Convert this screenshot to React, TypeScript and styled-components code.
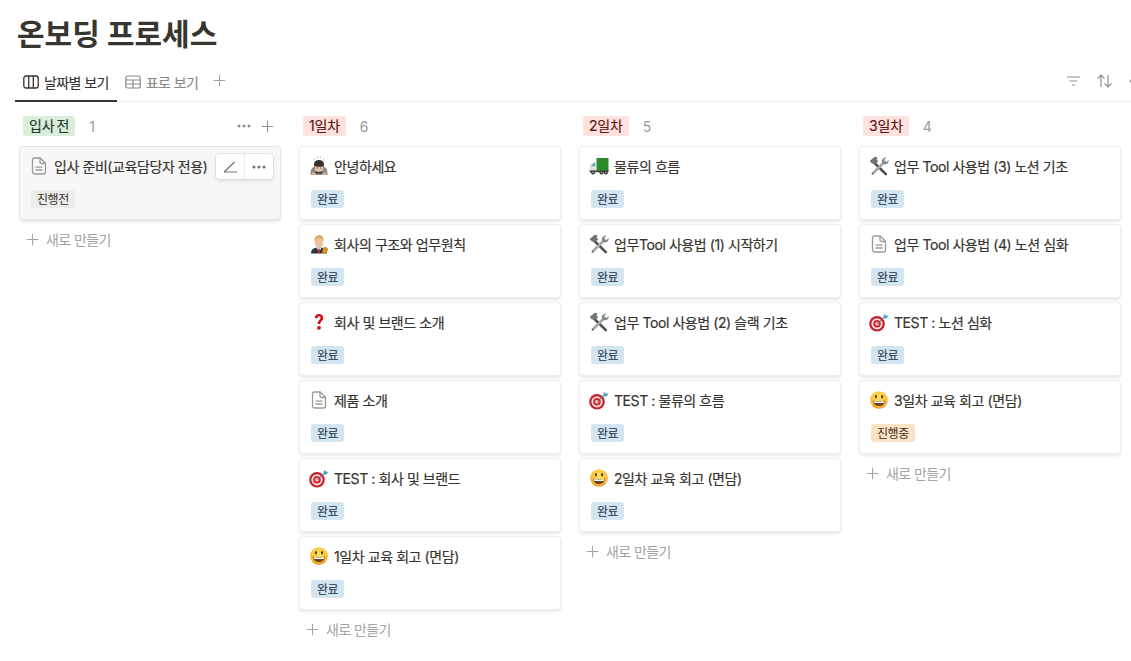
import React from "react";
import styled, { createGlobalStyle } from "styled-components";

const Global = createGlobalStyle`
  html, body { margin: 0; padding: 0; background: #fff; overflow: hidden; }
  body { font-family: Inter, "Noto Sans CJK KR", "Noto Sans", sans-serif; color: #37352f; }
`;

const Page = styled.div`
  width: 1131px;
  height: 661px;
  overflow: hidden;
  padding-left: 15px;
  box-sizing: border-box;
`;
const Title = styled.h1`
  margin: 0;
  padding: 13px 0 0 2px;
  height: 60px;
  box-sizing: border-box;
  font-size: 30px;
  line-height: 42px;
  font-weight: 700;
  color: #37352f;
  white-space: nowrap;
`;
const TabBar = styled.div`
  display: flex;
  align-items: stretch;
  height: 42px;
  border-bottom: 1px solid #ededec;
  box-sizing: border-box;
  width: 1116px;
`;
const Tab = styled.div<{ $active?: boolean }>`
  display: flex;
  align-items: center;
  gap: 5px;
  padding: 1px 8px 0;
  font-size: 14px;
  font-weight: 400;
  letter-spacing: -0.6px;
  -webkit-text-stroke: 0.15px currentColor;
  color: ${(p) => (p.$active ? "#37352f" : "#8b8a86")};
  box-shadow: ${(p) => (p.$active ? "inset 0 -2px 0 #37352f" : "none")};
  margin-bottom: -1px;
  white-space: nowrap;
`;
const AddTab = styled.div`
  display: flex;
  align-items: center;
  margin-left: 7px;
  color: #a5a4a1;
`;
const Actions = styled.div`
  margin-left: auto;
  display: flex;
  align-items: center;
  gap: 17px;
  color: #91908c;
  margin-right: -14px;
`;
const Board = styled.div`
  display: flex;
  gap: 18px;
  padding: 14px 0 0 4px;
`;
const Column = styled.div`
  width: 262px;
  flex: none;
  display: flex;
  flex-direction: column;
`;
const ColHead = styled.div`
  display: flex;
  align-items: center;
  height: 20px;
  margin-bottom: 10px;
  padding-left: 4px;
`;
const HeadTag = styled.span<{ $bg: string; $fg: string }>`
  height: 20px;
  line-height: 20px;
  padding: 0 6px;
  border-radius: 3px;
  font-size: 14px;
  font-weight: 400;
  letter-spacing: -0.2px;
  word-spacing: -1.5px;
  -webkit-text-stroke: 0.15px currentColor;
  background: ${(p) => p.$bg};
  color: ${(p) => p.$fg};
`;
const Count = styled.span`
  margin-left: 14px;
  font-size: 14px;
  color: #9b9a97;
`;
const HeadActions = styled.div`
  margin-left: auto;
  margin-right: 7px;
  display: flex;
  align-items: center;
  gap: 10px;
  color: #91908c;
`;
const Cards = styled.div`
  display: flex;
  flex-direction: column;
  gap: 4px;
`;
const Card = styled.div<{ $hover?: boolean }>`
  position: relative;
  height: 74px;
  box-sizing: border-box;
  border-radius: 4px;
  background: ${(p) => (p.$hover ? "#f7f7f7" : "#fff")};
  box-shadow: inset 0 0 0 1px rgba(15, 15, 15, 0.07), 0 2px 3px rgba(15, 15, 15, 0.09);
  padding: 9px 10px 0;
`;
const CardTitle = styled.div`
  display: flex;
  align-items: center;
  gap: 5px;
  height: 22px;
  font-size: 14px;
  font-weight: 400;
  letter-spacing: -0.42px;
  -webkit-text-stroke: 0.2px currentColor;
  color: #37352f;
  white-space: nowrap;
`;
const IconSlot = styled.span`
  width: 20px;
  height: 20px;
  display: flex;
  align-items: center;
  justify-content: center;
  flex: none;
`;
const Tag = styled.span<{ $bg: string; $fg: string }>`
  display: block;
  width: fit-content;
  margin: 13px 0 0 2px;
  height: 18px;
  line-height: 20px;
  padding: 0 6px;
  border-radius: 3px;
  font-size: 12px;
  letter-spacing: -0.45px;
  background: ${(p) => p.$bg};
  color: ${(p) => p.$fg};
`;
const Hover = styled.div`
  position: absolute;
  top: 8px;
  right: 8px;
  width: 57px;
  height: 25px;
  display: flex;
  background: #fff;
  border-radius: 4px;
  box-shadow: 0 0 0 1px rgba(15, 15, 15, 0.06), 0 2px 4px rgba(15, 15, 15, 0.1);
  color: #6f6e69;
`;
const HoverBtn = styled.span<{ $divided?: boolean }>`
  flex: 1;
  display: flex;
  align-items: center;
  justify-content: center;
  border-left: ${(p) => (p.$divided ? "1px solid #ededec" : "none")};
`;
const AddRow = styled.div`
  display: flex;
  align-items: center;
  gap: 7px;
  height: 20px;
  margin-top: 9px;
  padding-left: 7px;
  font-size: 14px;
  letter-spacing: -0.6px;
  color: #a5a4a1;
`;

const Plus = ({ s = 14 }: { s?: number }) => (
  <svg width={s} height={s} viewBox="0 0 14 14" fill="none" stroke="currentColor" strokeWidth="1.2">
    <path d="M7 .8v12.4M.8 7h12.4" />
  </svg>
);
const Dots = () => (
  <svg width="14" height="4" viewBox="0 0 14 4" fill="currentColor">
    <circle cx="2" cy="2" r="1.5" />
    <circle cx="7" cy="2" r="1.5" />
    <circle cx="12" cy="2" r="1.5" />
  </svg>
);
const Doc = () => (
  <svg width="16" height="18" viewBox="0 0 16 18" fill="none" stroke="#9b9a97" strokeWidth="1.3">
    <path d="M3 1h6.2L14.5 6.2V15a2 2 0 0 1-2 2h-9a2 2 0 0 1-2-2V3a2 2 0 0 1 1.500-2z" />
    <path d="M9 1.200V5a1.500 1.500 0 0 0 1.500 1.500h4" />
    <path d="M4.500 10.200h7M4.500 13h7" />
  </svg>
);
const Smile = () => (
  <svg width="18" height="18" viewBox="0 0 20 20">
    <defs>
      <radialGradient id="sm" cx="50%" cy="38%" r="62%">
        <stop offset="0" stopColor="#ffe06a" />
        <stop offset="0.7" stopColor="#fcc234" />
        <stop offset="1" stopColor="#ee8f1e" />
      </radialGradient>
    </defs>
    <circle cx="10" cy="10" r="9.800" fill="url(#sm)" />
    <ellipse cx="6.600" cy="6.400" rx="1.200" ry="2" fill="#5a3f14" />
    <ellipse cx="13.400" cy="6.400" rx="1.200" ry="2" fill="#5a3f14" />
    <path d="M3.200 10.600c2 .9 11.600.9 13.600 0-.3 3.800-3.100 6.200-6.800 6.200s-6.500-2.400-6.800-6.200z" fill="#6b4516" />
    <path d="M4 11.100c2.400.7 9.600.7 12 0l-.4 1.900c-2.500.6-8.700.6-11.200 0z" fill="#fff" />
  </svg>
);
const Target = () => (
  <svg width="20" height="20" viewBox="0 0 20 20">
    <circle cx="8" cy="11.800" r="7.800" fill="#c4202e" />
    <circle cx="8" cy="11.800" r="5.600" fill="#f1dcd8" />
    <circle cx="8" cy="11.800" r="3.800" fill="#d12a35" />
    <circle cx="8" cy="11.800" r="1.700" fill="#f1dcd8" />
    <path d="M8 11.800L16 4.500" stroke="#5d6b74" strokeWidth="1" />
    <path d="M14.300 5.600l1-3.600 1.500 1.500 2.400.2-1.300 2.400-2.200.6z" fill="#36a9c9" />
  </svg>
);
const Tools = () => (
  <svg width="20" height="20" viewBox="0 0 20 20">
    <path d="M5 6.500L16.800 18.200" stroke="#4c4f52" strokeWidth="2.600" strokeLinecap="round" />
    <path d="M.6 5L5.800.8l3 .8-1.200 1.300 1.500 2.300-3 3-1.800-1.700-1.100 1.200z" fill="#6f7477" />
    <path d="M15.600 5.800L3.700 17.500" stroke="#a2a6a9" strokeWidth="2.600" strokeLinecap="round" />
    <path d="M13 6.300c-.6-2.400 1.300-5 4.400-4.700l-2.300 2.400.6 1.700 1.700.5 2.300-2.300c.3 3-2.300 5-4.800 4.300z" fill="#7f8487" />
    <circle cx="3.600" cy="17.500" r=".7" fill="#55585a" />
  </svg>
);
const Truck = () => (
  <svg width="20" height="20" viewBox="0 0 20 20">
    <rect x="7.500" y="2" width="12" height="13" fill="#2c8a2c" />
    <path d="M7 6H4L.5 10.500V15H7z" fill="#dfe3d8" />
    <path d="M6.300 7.200H4.300L2 10.300h4.300z" fill="#57b0c9" />
    <rect x="0.500" y="14.500" width="19" height="1.800" fill="#4b4a42" />
    <circle cx="4" cy="16.400" r="2" fill="#2a2a28" />
    <circle cx="12.500" cy="16.400" r="2" fill="#2a2a28" />
    <circle cx="16.800" cy="16.400" r="2" fill="#2a2a28" />
    <circle cx="4" cy="16.400" r=".8" fill="#bbb" />
    <circle cx="12.500" cy="16.400" r=".8" fill="#bbb" />
    <circle cx="16.800" cy="16.400" r=".8" fill="#bbb" />
  </svg>
);
const Question = () => (
  <svg width="20" height="20" viewBox="0 0 20 20">
    <path d="M5.800 6.200C5.800.6 14.200.6 14.200 5.700c0 3.200-3 3.600-3 6.300H8.700c0-3.900 2.800-4.100 2.800-6.300 0-1.900-3-2-3 .5z" fill="#e3000f" />
    <circle cx="10" cy="15.800" r="1.900" fill="#e3000f" />
  </svg>
);
const Bow = () => (
  <svg width="20" height="20" viewBox="0 0 20 20">
    <path d="M1.500 19c-.5-6 2.500-9.500 8.500-9.500s9 3.500 8.500 9.500z" fill="#85888b" />
    <path d="M5 8.500C5 5.500 7 4 10 4s5 1.500 5 4.500l-.4 3H5.400z" fill="#37302c" />
    <path d="M5.600 10c1 1 7.800 1 8.800 0l-.3 3.500c-.9 2.800-7.300 2.800-8.200 0z" fill="#e9c5a3" />
    <path d="M7.600 12h1.500M10.900 12h1.500" stroke="#3b2a20" strokeWidth=".7" />
    <path d="M7 15.500c2 1 4 1 6 0l.8 2H6.200z" fill="#3a3633" />
    <path d="M2 19l1.500-3 3 1 .5 2zM18 19l-1.500-3-3 1-.5 2z" fill="#d9b08e" />
    <path d="M5 2.500l.6 1.100M8.200.8l.3 1.300M11.800.8l-.3 1.300M15 2.500l-.6 1.100" stroke="#a5a5a5" strokeWidth=".8" />
  </svg>
);
const Boss = () => (
  <svg width="20" height="20" viewBox="0 0 20 20">
    <path d="M2 19.500c0-4.500 3-6 8-6s8 1.500 8 6z" fill="#2c3642" />
    <path d="M7.500 13.500h5L10 18.500z" fill="#f3f3f3" />
    <path d="M9.400 14.500h1.200l.6 4.500H8.800z" fill="#b22a2a" />
    <ellipse cx="10" cy="8.500" rx="4.300" ry="5" fill="#eac39a" />
    <path d="M5.300 7.500C5 3.200 7.500 1 10.300 1c3 0 4.800 2.300 4.400 6.500-.7-2-2-3-4.400-3-2 0-4 1-5 3z" fill="#dcb36c" />
    <path d="M13 19.500l1-5.500c2-2 5-.8 5 1.500l-1.500 4z" fill="#dd8f20" />
  </svg>
);

type Status = "done" | "doing" | "todo";
const tags: Record<Status, { label: string; bg: string; fg: string }> = {
  done: { label: "완료", bg: "#d3e5ef", fg: "#183347" },
  doing: { label: "진행중", bg: "#fae3c4", fg: "#402c1b" },
  todo: { label: "진행전", bg: "#ececeb", fg: "#32302c" },
};

type CardData = { icon: React.ReactNode; title: string; status: Status; hover?: boolean };
type ColData = { name: string; bg: string; fg: string; actions?: boolean; cards: CardData[] };

const red = { bg: "#ffe2dd", fg: "#5d1715" };
const columns: ColData[] = [
  {
    name: "입사 전", bg: "#dbeddb", fg: "#1c3829", actions: true,
    cards: [{ icon: <Doc />, title: "입사 준비(교육담당자 전용)", status: "todo", hover: true }],
  },
  {
    name: "1일차", ...red,
    cards: [
      { icon: <Bow />, title: "안녕하세요", status: "done" },
      { icon: <Boss />, title: "회사의 구조와 업무원칙", status: "done" },
      { icon: <Question />, title: "회사 및 브랜드 소개", status: "done" },
      { icon: <Doc />, title: "제품 소개", status: "done" },
      { icon: <Target />, title: "TEST : 회사 및 브랜드", status: "done" },
      { icon: <Smile />, title: "1일차 교육 회고 (면담)", status: "done" },
    ],
  },
  {
    name: "2일차", ...red,
    cards: [
      { icon: <Truck />, title: "물류의 흐름", status: "done" },
      { icon: <Tools />, title: "업무Tool 사용법 (1) 시작하기", status: "done" },
      { icon: <Tools />, title: "업무 Tool 사용법 (2) 슬랙 기초", status: "done" },
      { icon: <Target />, title: "TEST : 물류의 흐름", status: "done" },
      { icon: <Smile />, title: "2일차 교육 회고 (면담)", status: "done" },
    ],
  },
  {
    name: "3일차", ...red,
    cards: [
      { icon: <Tools />, title: "업무 Tool 사용법 (3) 노션 기초", status: "done" },
      { icon: <Doc />, title: "업무 Tool 사용법 (4) 노션 심화", status: "done" },
      { icon: <Target />, title: "TEST : 노션 심화", status: "done" },
      { icon: <Smile />, title: "3일차 교육 회고 (면담)", status: "doing" },
    ],
  },
];

export default function App() {
  return (
    <Page>
      <Global />
      <Title>온보딩 프로세스</Title>
      <TabBar>
        <Tab $active>
          <svg width="16" height="14" viewBox="0 0 16 14" fill="none" stroke="#37352f" strokeWidth="1.300">
            <rect x=".8" y="1" width="14.400" height="12" rx="2.200" />
            <path d="M5.700 1v12M10.300 1v12" />
          </svg>
          날짜별 보기
        </Tab>
        <Tab>
          <svg width="16" height="14" viewBox="0 0 16 14" fill="none" stroke="#8b8a86" strokeWidth="1.200">
            <rect x=".8" y="1" width="14.400" height="12" rx="2" />
            <path d="M.8 5h14.400M.8 9h14.400M8 5v8" />
          </svg>
          표로 보기
        </Tab>
        <AddTab>
          <Plus s={13} />
        </AddTab>
        <Actions>
          <svg width="13" height="10" viewBox="0 0 13 10" fill="none" stroke="currentColor" strokeWidth="1.200">
            <path d="M0 1h13M2.500 5h8M5 9h3" />
          </svg>
          <svg width="15" height="14" viewBox="0 0 15 14" fill="none" stroke="currentColor" strokeWidth="1.200">
            <path d="M4 13V1M.5 4.500L4 1l3.500 3.500M11 1v12M7.500 9.500L11 13l3.500-3.500" />
          </svg>
          <svg width="16" height="14" viewBox="0 0 16 14" fill="none" stroke="currentColor" strokeWidth="1.200">
            <path d="M1 7l4-4M1 7l4 4" />
          </svg>
        </Actions>
      </TabBar>
      <Board>
        {columns.map((col) => (
          <Column key={col.name}>
            <ColHead>
              <HeadTag $bg={col.bg} $fg={col.fg}>{col.name}</HeadTag>
              <Count>{col.cards.length}</Count>
              {col.actions && (
                <HeadActions>
                  <Dots />
                  <Plus s={13} />
                </HeadActions>
              )}
            </ColHead>
            <Cards>
              {col.cards.map((c) => (
                <Card key={c.title} $hover={c.hover}>
                  <CardTitle>
                    <IconSlot>{c.icon}</IconSlot>
                    {c.title}
                  </CardTitle>
                  <Tag $bg={tags[c.status].bg} $fg={tags[c.status].fg}>{tags[c.status].label}</Tag>
                  {c.hover && (
                    <Hover>
                      <HoverBtn>
                        <svg width="15" height="12" viewBox="0 0 15 12" fill="none" stroke="currentColor" strokeWidth="1.100">
                          <path d="M1 11L11.500 1M1 11h13" />
                        </svg>
                      </HoverBtn>
                      <HoverBtn $divided>
                        <Dots />
                      </HoverBtn>
                    </Hover>
                  )}
                </Card>
              ))}
            </Cards>
            <AddRow>
              <Plus s={13} />
              새로 만들기
            </AddRow>
          </Column>
        ))}
      </Board>
    </Page>
  );
}
